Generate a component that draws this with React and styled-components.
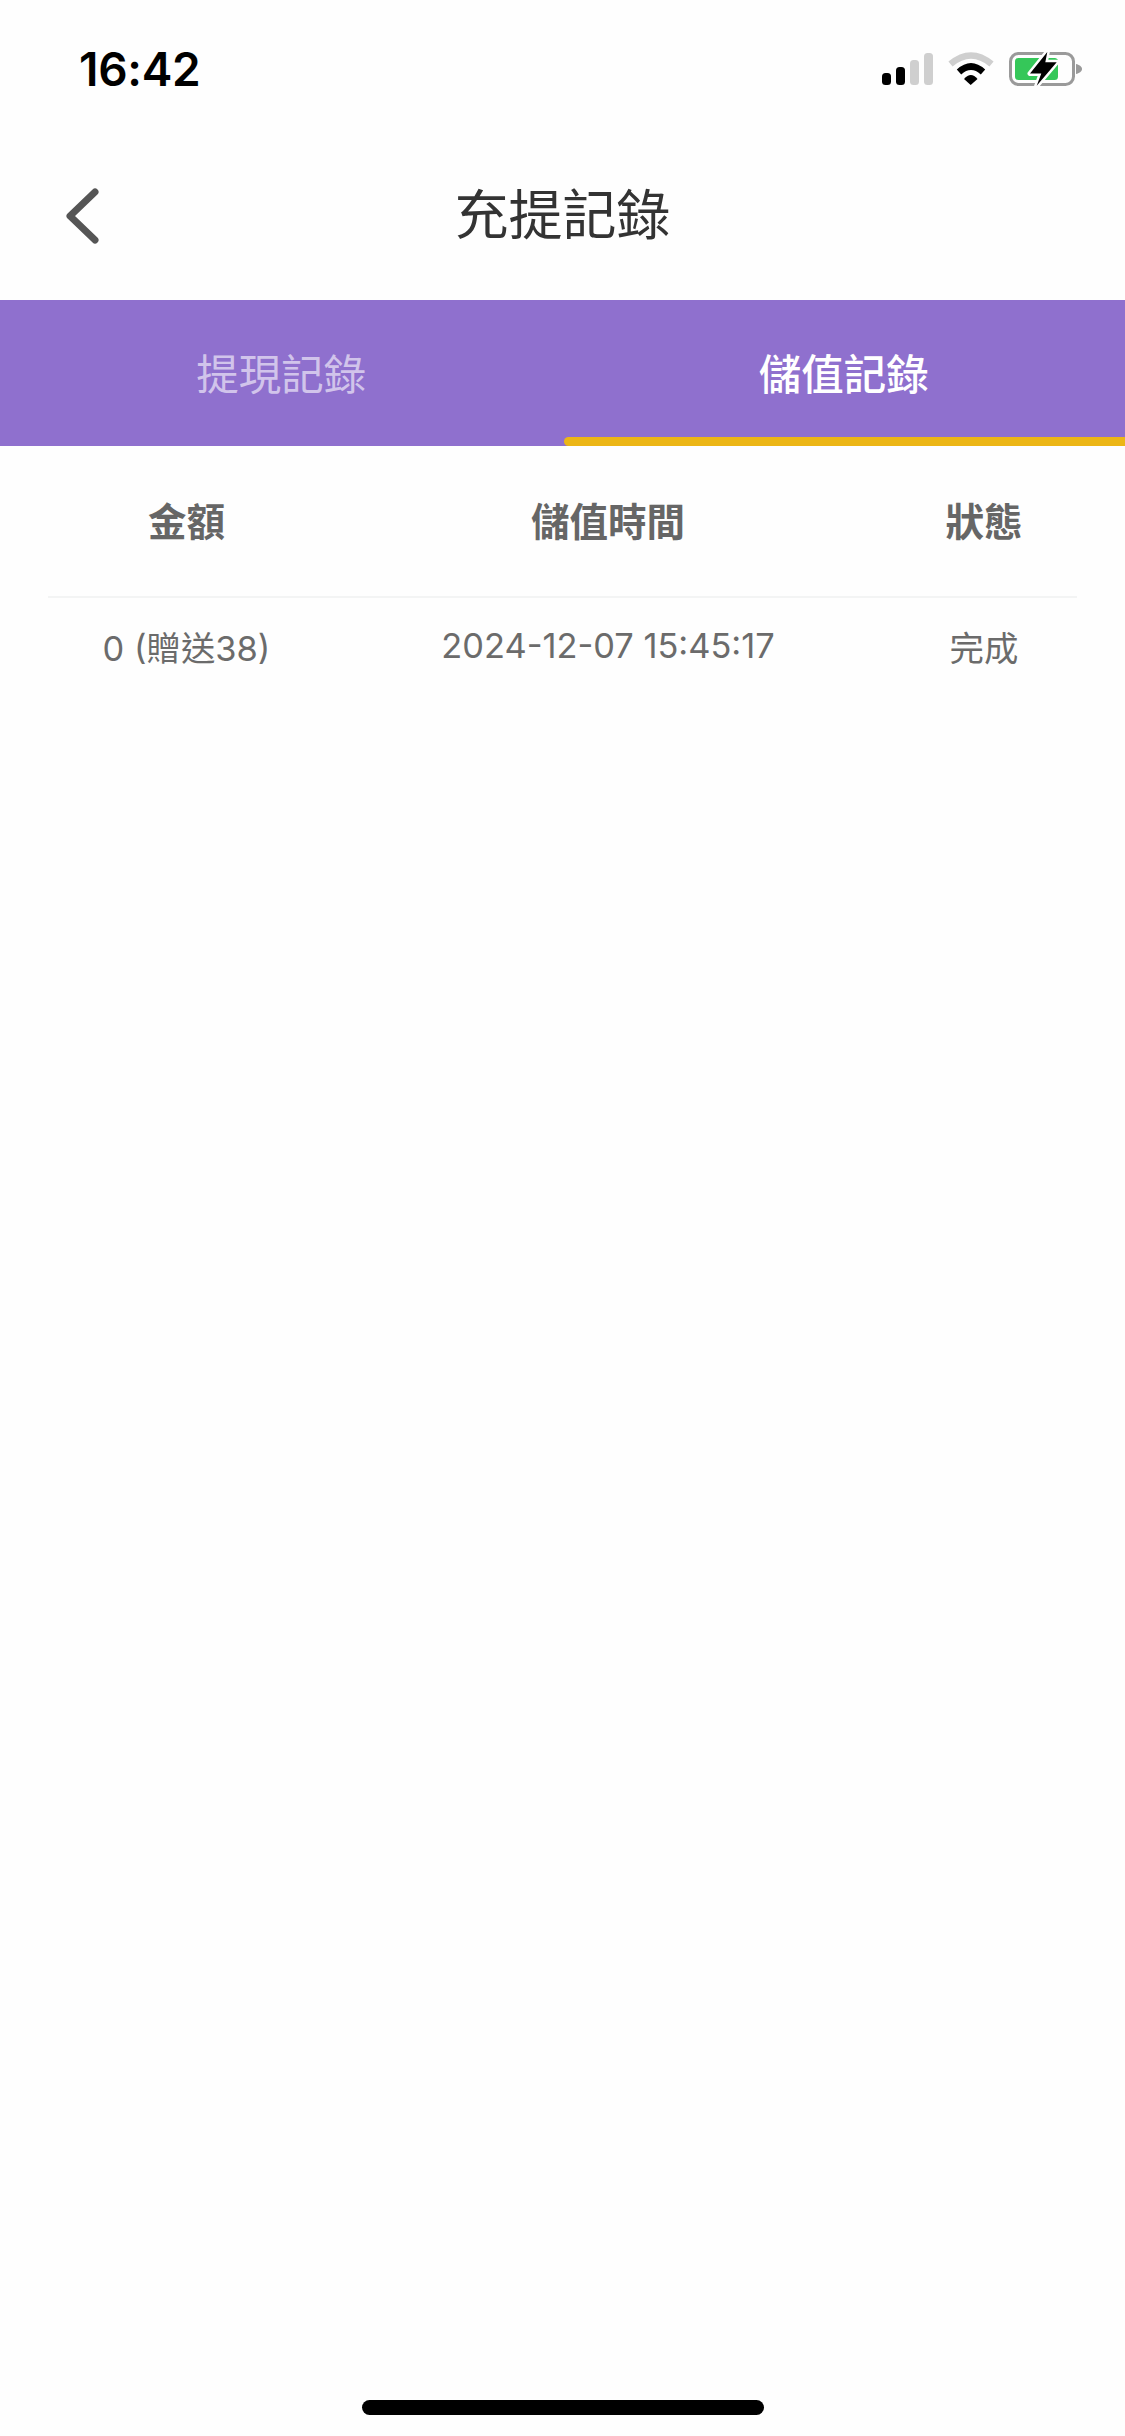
import React from "react";
import styled, { createGlobalStyle } from "styled-components";

const rows = [{ amount: "0 (贈送38)", time: "2024-12-07 15:45:17", status: "完成" }];

const App = () => {
  return (
    <Page>
      <GlobalStyle />
      <StatusBar>
        <Clock>16:42</Clock>
        <StatusIcons>
          <svg width="51" height="32" viewBox="0 0 51 32">
            <rect x="0" y="20" width="9" height="12" rx="3.5" fill="#000" />
            <rect x="14" y="14" width="9" height="18" rx="3.5" fill="#000" />
            <rect x="28" y="7" width="9" height="25" rx="3.5" fill="#cfcfcf" />
            <rect x="42" y="0" width="9" height="32" rx="3.5" fill="#cfcfcf" />
          </svg>
          <svg width="46" height="34" viewBox="0 0 46 34">
            <path d="M2.5 12Q23 -5 43.5 12" fill="none" stroke="#cfcfcf" strokeWidth="6.5" />
            <path d="M11 20Q23 9 35 20" fill="none" stroke="#000" strokeWidth="6.5" />
            <path d="M16 27Q23 19 29.5 27L22.7 33Z" fill="#000" />
          </svg>
          <svg width="74" height="36" viewBox="0 0 74 36">
            <rect x="1.5" y="2.5" width="63" height="31" rx="8" fill="none" stroke="#9a9a9a" strokeWidth="3" />
            <rect x="6" y="7" width="43" height="22" rx="3.5" fill="#35c759" />
            <path d="M67 13C70 13.5 73 15.5 73 18C73 20.5 70 22.5 67 23Z" fill="#9a9a9a" />
            <path
              d="M38.3 1L21 22.5H32.3L27.7 34.8L47.7 11.2H36.3Z"
              fill="#000"
              stroke="#fefefe"
              strokeWidth="5"
              strokeLinejoin="round"
              paintOrder="stroke"
            />
          </svg>
        </StatusIcons>
      </StatusBar>

      <NavBar>
        <BackButton>
          <svg width="34" height="56" viewBox="0 0 34 56">
            <path d="M29 4L4 28L29 52" fill="none" stroke="#555" strokeWidth="7" strokeLinecap="round" strokeLinejoin="round" />
          </svg>
        </BackButton>
        <Title>充提記錄</Title>
      </NavBar>

      <Tabs>
        <Tab>提現記錄</Tab>
        <Tab $active>儲值記錄</Tab>
      </Tabs>

      <Table>
        <HeaderRow>
          <HeaderCell>金額</HeaderCell>
          <HeaderCell>儲值時間</HeaderCell>
          <HeaderCell>狀態</HeaderCell>
        </HeaderRow>
        {rows.map((row) => (
          <BodyRow key={row.time}>
            <BodyCell>{row.amount}</BodyCell>
            <BodyCell>{row.time}</BodyCell>
            <BodyCell>{row.status}</BodyCell>
          </BodyRow>
        ))}
      </Table>

      <HomeIndicator />
    </Page>
  );
};

export default App;

const GlobalStyle = createGlobalStyle`
  html, body {
    margin: 0;
    padding: 0;
    background: #fefefe;
  }

  body {
    font-family: Inter, "Noto Sans CJK TC", sans-serif;
  }
`;

const Page = styled.div`
  position: relative;
  display: flex;
  flex-direction: column;
  width: 1125px;
  height: 2436px;
  background: #fefefe;
  overflow: hidden;
`;

const StatusBar = styled.div`
  display: flex;
  justify-content: space-between;
  align-items: center;
  height: 138px;
  box-sizing: border-box;
  padding: 0 42px 0 79px;
`;

const Clock = styled.div`
  font-size: 46px;
  font-weight: 600;
  color: #000;
  letter-spacing: -0.3px;
`;

const StatusIcons = styled.div`
  display: flex;
  align-items: center;
  gap: 15px;
`;

const NavBar = styled.div`
  position: relative;
  display: flex;
  justify-content: center;
  align-items: center;
  height: 162px;
  padding-bottom: 16px;
  box-sizing: border-box;
`;

const BackButton = styled.div`
  position: absolute;
  left: 66px;
  top: 50px;
  display: flex;
`;

const Title = styled.div`
  font-size: 54px;
  color: #333;
  font-family: "Noto Sans CJK TC", sans-serif;
`;

const Tabs = styled.div`
  display: flex;
  height: 146px;
  background: #8f70ce;
`;

const Tab = styled.div`
  position: relative;
  flex: 1;
  display: flex;
  justify-content: center;
  align-items: center;
  padding-bottom: 4px;
  box-sizing: border-box;
  font-family: "Noto Sans CJK TC", sans-serif;
  font-size: 42.5px;
  font-weight: ${(p) => (p.$active ? 500 : 400)};
  color: ${(p) => (p.$active ? "#fff" : "rgba(255, 255, 255, 0.6)")};

  ${(p) =>
    p.$active &&
    `
    &::after {
      content: "";
      position: absolute;
      left: 1px;
      right: 0;
      bottom: 0;
      height: 9px;
      border-radius: 5px 0 0 5px;
      background: #ecb616;
    }
  `}
`;

const Table = styled.div`
  display: flex;
  flex-direction: column;
  margin: 0 48px;
`;

const HeaderRow = styled.div`
  display: grid;
  grid-template-columns: 277px 566px 186px;
  align-items: center;
  height: 152px;
  padding-bottom: 4px;
  border-bottom: 2px solid #f3f4f4;
  box-sizing: border-box;
`;

const HeaderCell = styled.div`
  text-align: center;
  font-family: "Noto Sans CJK TC", sans-serif;
  font-size: 38.5px;
  font-weight: 700;
  color: #666;
`;

const BodyRow = styled.div`
  display: grid;
  grid-template-columns: 277px 566px 186px;
  align-items: center;
  height: 102px;
  padding-bottom: 7px;
  box-sizing: border-box;
`;

const BodyCell = styled.div`
  text-align: center;
  font-size: 34.4px;
  color: #6b6b6b;
`;

const HomeIndicator = styled.div`
  position: absolute;
  left: 362px;
  bottom: 21px;
  width: 402px;
  height: 15px;
  border-radius: 8px;
  background: #000;
`;
